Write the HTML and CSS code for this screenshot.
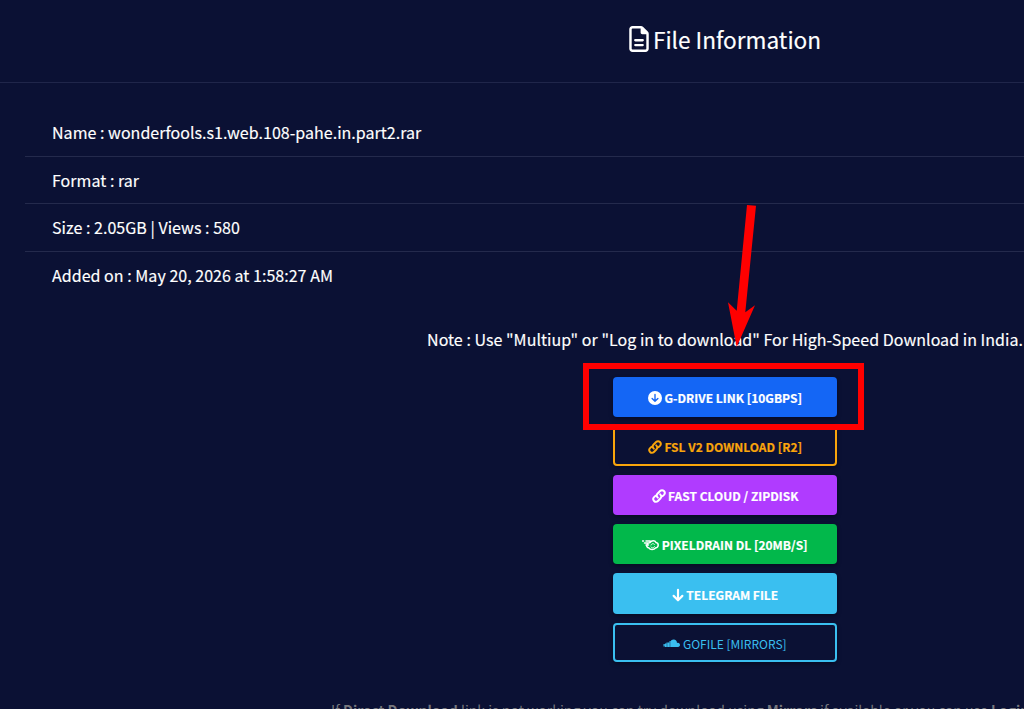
FILE: index.html
```html
<!DOCTYPE html>
<html lang="en">
<head>
    <meta charset="UTF-8">
    <meta name="viewport" content="width=device-width, initial-scale=1.0">
    <title>File Information</title>
    <link rel="stylesheet" href="styles.css">
</head>
<body>
    <div class="page">
        <header class="page-header">
            <svg class="title-icon" viewBox="0 0 384 512" fill="currentColor"><path d="M64 464c-8.800 0-16-7.200-16-16V64c0-8.800 7.200-16 16-16h160v80c0 17.700 14.300 32 32 32h80v288c0 8.800-7.200 16-16 16H64zM64 0C28.700 0 0 28.700 0 64v384c0 35.300 28.700 64 64 64h256c35.300 0 64-28.700 64-64V154.500c0-17-6.700-33.300-18.700-45.300L274.700 18.700C262.700 6.700 246.500 0 229.500 0H64zm56 256c-13.300 0-24 10.700-24 24s10.700 24 24 24h144c13.300 0 24-10.700 24-24s-10.700-24-24-24H120zm0 96c-13.300 0-24 10.700-24 24s10.700 24 24 24h144c13.300 0 24-10.700 24-24s-10.700-24-24-24H120z"/></svg>
            <h1>File Information</h1>
        </header>

        <main class="content">
            <ul class="file-info">
                <li>Name : wonderfools.s1.web.108-pahe.in.part2.rar</li>
                <li>Format : rar</li>
                <li>Size : 2.05GB | Views : 580</li>
                <li>Added on : May 20, 2026 at 1:58:27 AM</li>
            </ul>

            <p class="note">Note : Use "Multiup" or "Log in to download" For High-Speed Download in India.</p>

            <div class="buttons">
                <a class="btn btn-blue">
                    <svg class="icon" viewBox="0 0 512 512"><circle cx="256" cy="256" r="256" fill="#fff"/><path d="M256 130v244M150 272l106 106 106-106" fill="none" stroke="#1466f5" stroke-width="50" stroke-linecap="round" stroke-linejoin="round"/></svg>
                    <span>G-DRIVE LINK [10GBPS]</span>
                </a>
                <a class="btn btn-outline-orange">
                    <svg class="icon" viewBox="0 0 512 512" fill="none" stroke="currentColor" stroke-width="72" stroke-linecap="round"><path d="M212 316c-48-48-48-110-6-152l90-90c42-42 100-42 140 0s40 98 0 140l-48 48M300 196c48 48 48 110 6 152l-90 90c-42 42-100 42-140 0s-40-98 0-140l48-48"/></svg>
                    <span>FSL V2 DOWNLOAD [R2]</span>
                </a>
                <a class="btn btn-purple">
                    <svg class="icon" viewBox="0 0 512 512" fill="none" stroke="currentColor" stroke-width="72" stroke-linecap="round"><path d="M212 316c-48-48-48-110-6-152l90-90c42-42 100-42 140 0s40 98 0 140l-48 48M300 196c48 48 48 110 6 152l-90 90c-42 42-100 42-140 0s-40-98 0-140l48-48"/></svg>
                    <span>FAST CLOUD / ZIPDISK</span>
                </a>
                <a class="btn btn-green">
                    <svg class="icon icon-wide" viewBox="0 0 34 28" fill="none" stroke="currentColor" stroke-width="3" stroke-linecap="round"><path d="M1 6h2M8 6h8M5 10h9M8 14h5M16 9c3-5 10-5 12 0 6 1 6 10-1 11-3 4-11 4-13 0-5-1-6-6-3-8"/><path d="M18 14c1-3 5-4 7-1M25 17c-1 3-5 4-7 1" stroke-width="1.8"/></svg>
                    <span>PIXELDRAIN DL [20MB/S]</span>
                </a>
                <a class="btn btn-cyan">
                    <svg class="icon icon-arrow" viewBox="0 0 384 512" fill="none" stroke="currentColor" stroke-width="78" stroke-linecap="round" stroke-linejoin="round"><path d="M192 64v376M32 288l160 160 160-160"/></svg>
                    <span>TELEGRAM FILE</span>
                </a>
                <a class="btn btn-outline-cyan">
                    <svg class="icon icon-wide" viewBox="0 0 34 28" fill="currentColor"><path d="M16 7c6-4 12-1 12 5 7-2 8 8 2 8H16zM13 8h2.600v12H13zM10 11h2.600v9H10zM7 11h2.600v9H7zM4 13h2.600v7H4zM1 14h2.600v5H1z"/></svg>
                    <span>GOFILE [MIRRORS]</span>
                </a>

                <div class="highlight"></div>
                <svg class="arrow" viewBox="0 0 30 144"><path d="M20 2l9 .7-10.700 106.600 9.700-7L9.700 144 1 99.300l8.700 8.400z" fill="#f00"/></svg>
            </div>

            <p class="hint">If <b>Direct Download</b> link is not working you can try download using <b>Mirrors</b> if available or you can use <b>Login</b> to download.</p>
        </main>
    </div>
</body>
</html>
```
FILE: styles.css
```css
* {
    box-sizing: border-box;
}

html, body {
    margin: 0;
    height: 100%;
    overflow: hidden;
    background-color: #0b1134;
    color: #fff;
    font-family: "Noto Sans CJK SC", "Open Sans", sans-serif;
    font-size: 16px;
}

.page {
    width: 1450px;
}

.page-header {
    height: 83px;
    padding-bottom: 4px;
    display: flex;
    justify-content: center;
    align-items: center;
    gap: 4px;
    border-bottom: 1px solid #20264a;
}

.page-header h1 {
    margin: 1px 0 0;
    font-size: 22.6px;
    line-height: 30px;
    font-weight: 400;
    -webkit-text-stroke: 0.15px #fff;
}

.title-icon {
    width: 20px;
    height: 26px;
}

.content {
    padding: 26px 25px 0;
}

.file-info {
    list-style: none;
    margin: 0;
    padding: 0;
}

.file-info li {
    height: 47.6px;
    padding-left: 27px;
    line-height: 46px;
    letter-spacing: 0.03px;
    border-bottom: 1px solid #242a4c;
    -webkit-text-stroke: 0.15px #fff;
}

.file-info li:last-child {
    border-bottom: none;
}

.note {
    margin: 28px 0 0;
    height: 25px;
    line-height: 24px;
    letter-spacing: 0.03px;
    text-align: center;
    white-space: nowrap;
    -webkit-text-stroke: 0.15px #fff;
}

.buttons {
    position: relative;
    width: 224px;
    margin: 24.6px auto 0;
    display: flex;
    flex-direction: column;
    gap: 9px;
}

.btn {
    height: 40.4px;
    border-radius: 4px;
    display: flex;
    justify-content: center;
    align-items: center;
    gap: 2.5px;
    padding-top: 2px;
    font-size: 12px;
    font-weight: 700;
    line-height: 20px;
    white-space: nowrap;
    box-shadow: 0 2px 4px rgba(0, 0, 0, 0.35);
    -webkit-text-stroke: 0.2px currentColor;
}

.btn-blue {
    background-color: #1466f5;
}

.btn-outline-orange {
    height: 39.3px;
    border: 2px solid #f9a50b;
    color: #f9a50b;
}

.btn-purple {
    background-color: #b03bff;
}

.btn-green {
    background-color: #02b84b;
}

.btn-cyan {
    background-color: #3abff0;
}

.btn-outline-cyan {
    height: 39.3px;
    padding-top: 3px;
    border: 2px solid #3abff0;
    color: #3abff0;
    font-weight: 400;
    -webkit-text-stroke: 0;
}

.icon {
    width: 14px;
    height: 14px;
}

.icon-wide {
    width: 17px;
}

.icon-arrow {
    width: 12px;
    overflow: visible;
}

.highlight {
    position: absolute;
    left: -30.5px;
    top: -13.6px;
    width: 281.5px;
    height: 67px;
    border: 6px solid #f00;
}

/* pointer to the first button */
.arrow {
    position: absolute;
    left: 114px;
    top: -173.6px;
    width: 30px;
    height: 144px;
}

.hint {
    margin: 38px 0 0;
    line-height: 20px;
    font-size: 14px;
    letter-spacing: 0.02px;
    text-align: center;
    color: #77777d;
}
```
